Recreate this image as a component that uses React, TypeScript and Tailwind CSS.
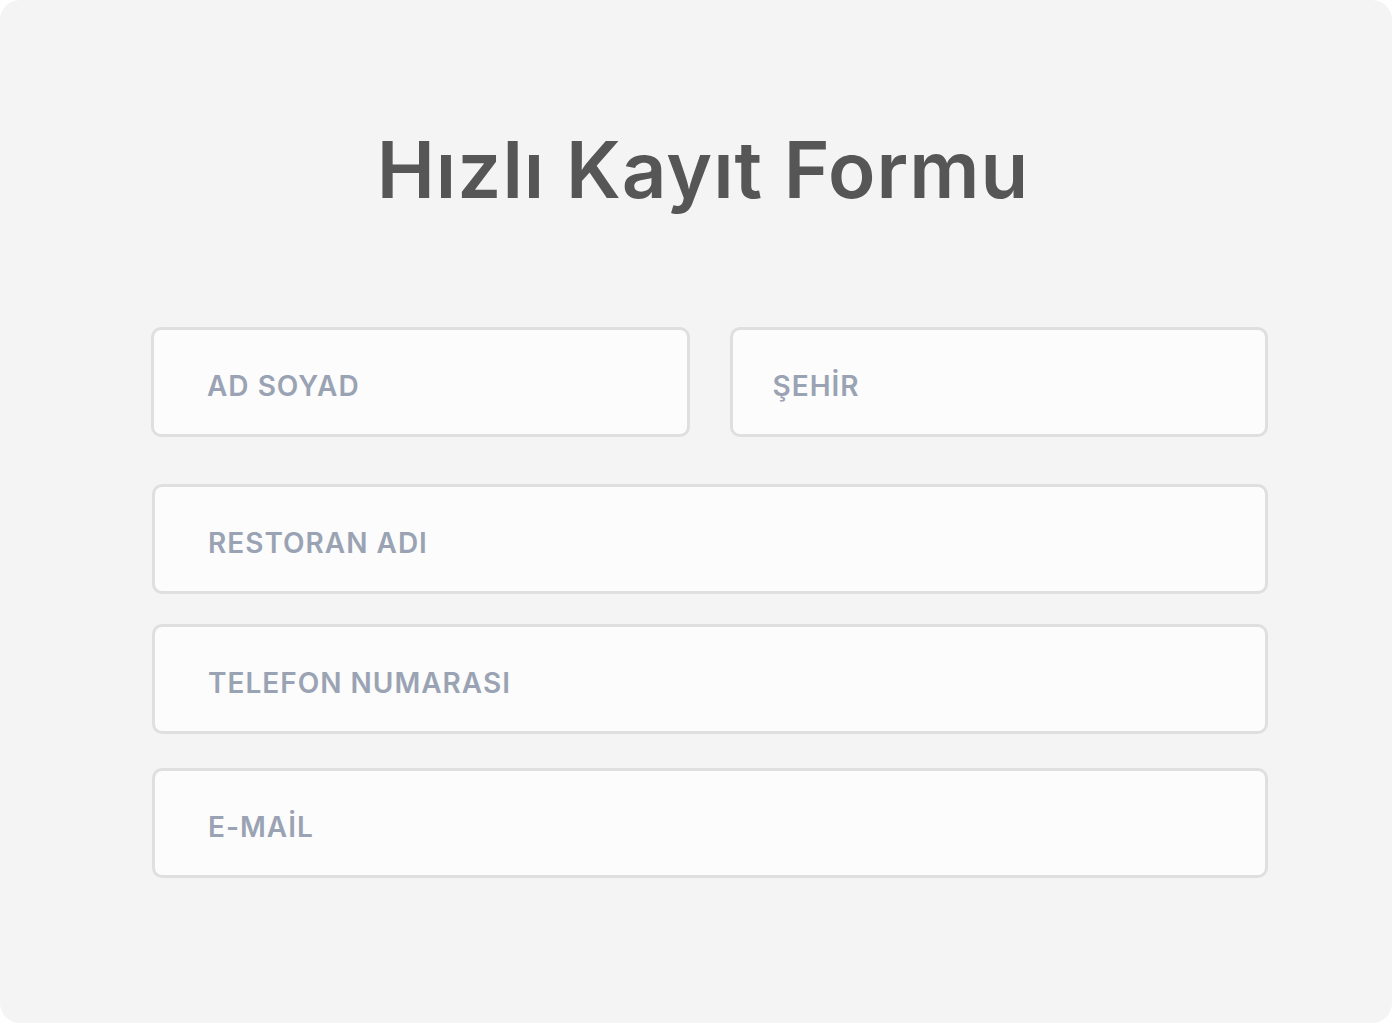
import React from "react";

const fieldCls =
  "w-full h-[110px] border-[3px] border-[#dfdfdf] rounded-[10px] bg-[#fcfcfc] pt-[7px] text-[28px] font-semibold tracking-[1px] text-[#555] placeholder:text-[#9aa3b3] outline-none font-['Inter',sans-serif]";

function Field({ placeholder, pad = "pl-[53px]" }: { placeholder: string; pad?: string }) {
  return <input type="text" placeholder={placeholder} className={`${fieldCls} ${pad}`} />;
}

export default function App() {
  return (
    <div className="min-h-screen bg-white font-['Inter',sans-serif]">
      <div className="h-[1023px] w-[1392px] rounded-[20px] bg-[#f4f4f4] pt-[131px]">
        {/* title */}
        <h1 className="pl-[14px] text-center text-[78px] leading-none font-semibold tracking-[1px] text-[#565656]">
          Hızlı Kayıt Formu
        </h1>

        {/* form */}
        <form className="ml-[151px] mt-[118px] w-[1117px]">
          <div className="grid grid-cols-2 gap-[40px]">
            <Field placeholder="AD SOYAD" />
            <Field placeholder="ŞEHİR" pad="pl-[40px]" />
          </div>
          <div className="ml-[1px] mt-[47px]">
            <Field placeholder="RESTORAN ADI" />
          </div>
          <div className="ml-[1px] mt-[30px]">
            <Field placeholder="TELEFON NUMARASI" />
          </div>
          <div className="ml-[1px] mt-[34px]">
            <Field placeholder="E-MAİL" />
          </div>
        </form>
      </div>
    </div>
  );
}
